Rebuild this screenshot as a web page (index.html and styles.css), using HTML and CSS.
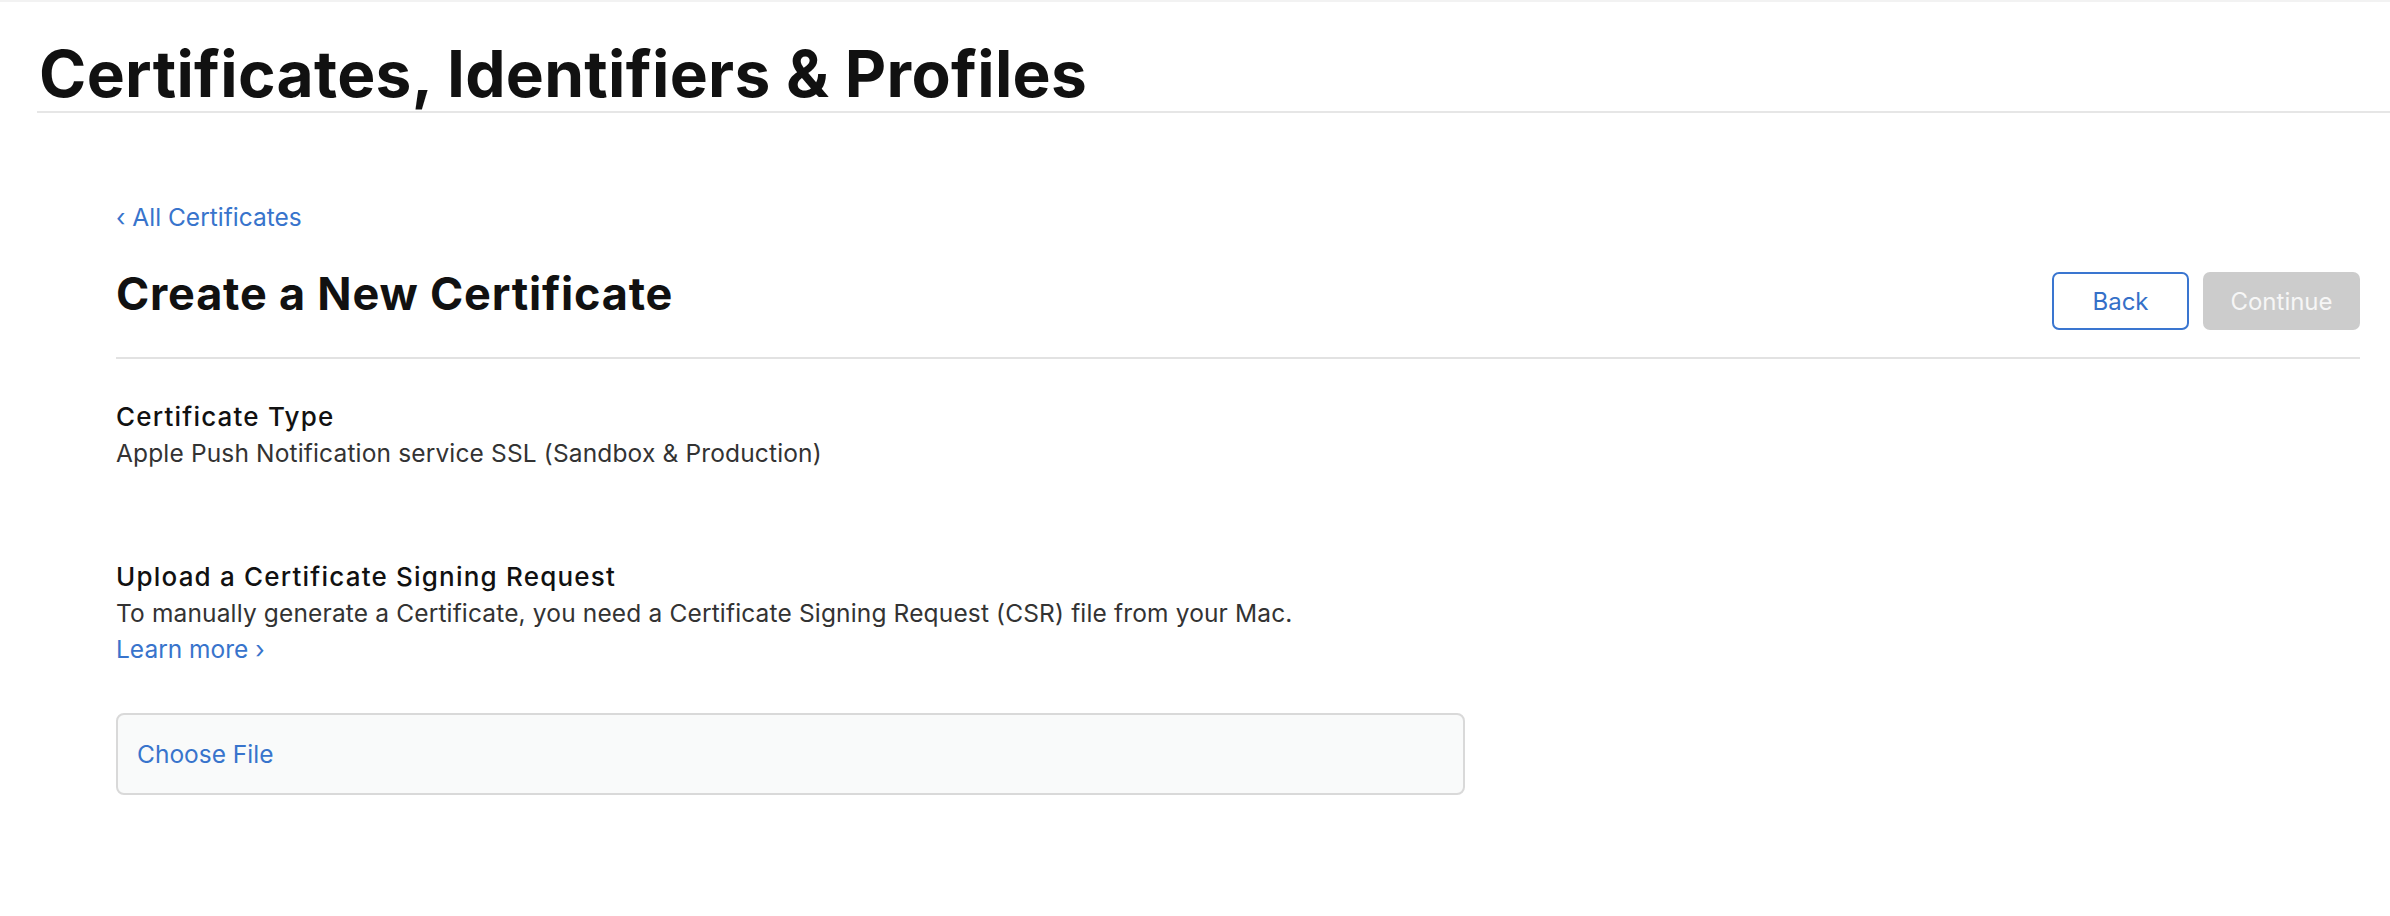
FILE: index.html
```html
<!DOCTYPE html>
<html lang="en">
<head>
<meta charset="utf-8">
<title>Certificates, Identifiers &amp; Profiles</title>
<link rel="stylesheet" href="styles.css">
</head>
<body>
<div class="topline"></div>
<header class="header">
  <h1 class="page-title">Certificates, Identifiers &amp; Profiles</h1>
</header>
<main class="content">
  <a class="back-link" href="#"><span class="chev">‹</span> All Certificates</a>
  <div class="title-row">
    <h2 class="section-title">Create a New Certificate</h2>
    <div class="actions">
      <button class="btn btn-back" type="button">Back</button>
      <button class="btn btn-continue" type="button" disabled>Continue</button>
    </div>
  </div>
  <section class="field first">
    <h3 class="field-label">Certificate Type</h3>
    <p class="field-text">Apple Push Notification service SSL (Sandbox &amp; Production)</p>
  </section>
  <section class="field second">
    <h3 class="field-label">Upload a Certificate Signing Request</h3>
    <p class="field-text">To manually generate a Certificate, you need a Certificate Signing Request (CSR) file from your Mac.</p>
    <a class="learn-link" href="#">Learn more <span class="chev">›</span></a>
    <div class="file-box"><span class="file-link">Choose File</span></div>
  </section>
</main>
</body>
</html>
```

FILE: styles.css
```css
html, body {
  margin: 0;
  padding: 0;
  background: #ffffff;
}
body {
  font-family: Inter, "Noto Sans", "Liberation Sans", sans-serif;
  color: #1d1d1f;
}
.topline {
  height: 2px;
  background: #f2f2f2;
}
.header {
  margin-left: 37px;
  padding: 40px 0 5px 0;
  border-bottom: 2px solid #e6e6e6;
}
.page-title {
  margin: 0;
  padding-left: 2px;
  font-size: 64px;
  line-height: 64px;
  font-weight: 700;
  letter-spacing: 0.3px;
  color: #111111;
}
.content {
  margin: 0 30px 0 116px;
  display: flex;
  flex-direction: column;
  align-items: flex-start;
}
.back-link {
  margin-top: 86px;
  font-size: 24.5px;
  line-height: 36px;
  color: #3874cc;
  text-decoration: none;
}
.chev {
  display: inline-block;
}
.title-row {
  align-self: stretch;
  margin-top: 30px;
  padding-bottom: 27px;
  border-bottom: 2px solid #e2e2e2;
  display: flex;
  justify-content: space-between;
  align-items: flex-start;
}
.section-title {
  margin: 0;
  font-size: 45px;
  line-height: 58px;
  font-weight: 700;
  letter-spacing: 0.8px;
  color: #111111;
}
.actions {
  margin-top: 7px;
  display: flex;
  gap: 14px;
}
.btn {
  height: 58px;
  border-radius: 7px;
  font-family: inherit;
  font-size: 24px;
  padding: 0;
}
.btn-back {
  width: 137px;
  background: #ffffff;
  border: 2px solid #3a76d0;
  color: #3570c8;
}
.btn-continue {
  width: 157px;
  background: #cccccc;
  border: none;
  color: #f6f6f6;
}
.field {
  display: flex;
  flex-direction: column;
  align-items: flex-start;
}
.field.first {
  margin-top: 40px;
}
.field.second {
  margin-top: 88px;
}
.field-label {
  margin: 0;
  font-size: 26px;
  line-height: 36px;
  font-weight: 500;
  letter-spacing: 1.2px;
  color: #111111;
}
.field-text {
  margin: 0;
  font-size: 24.5px;
  line-height: 36px;
  letter-spacing: 0.15px;
  color: #333333;
}
.learn-link {
  font-size: 24.5px;
  line-height: 36px;
  color: #3874cc;
  text-decoration: none;
}
.file-box {
  margin-top: 46px;
  box-sizing: border-box;
  width: 1349px;
  height: 82px;
  border: 2px solid #d9d9d9;
  border-radius: 8px;
  background: #f9fafa;
  display: flex;
  align-items: center;
  padding-left: 19px;
}
.file-link {
  font-size: 24.5px;
  color: #3874cc;
}
```
